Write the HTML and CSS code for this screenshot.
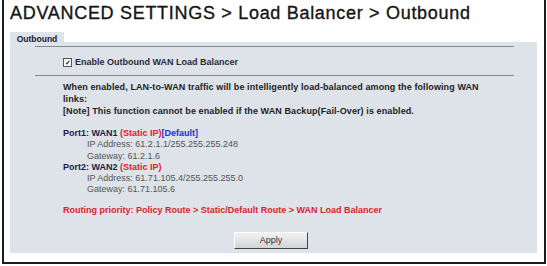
FILE: index.html
```html
<!DOCTYPE html>
<html lang="en">
<head>
    <meta charset="UTF-8">
    <title>Load Balancer - Outbound</title>
    <link rel="stylesheet" href="styles.css">
</head>
<body>
    <div class="frame">
        <h1 class="title">ADVANCED SETTINGS &gt; Load Balancer &gt; Outbound</h1>
        <div class="tabs">
            <span class="tab">Outbound</span>
        </div>
        <div class="panel">
            <hr class="rule">
            <label class="enable">
                <span class="check">&#10003;</span>
                Enable Outbound WAN Load Balancer
            </label>
            <hr class="rule">
            <div class="desc">
                <p>When enabled, LAN-to-WAN traffic will be intelligently load-balanced among the following WAN links:</p>
                <p>[Note] This function cannot be enabled if the WAN Backup(Fail-Over) is enabled.</p>
            </div>
            <div class="ports">
                <div class="port">Port1: WAN1 <span class="red">(Static IP)</span><span class="blue">[Default]</span></div>
                <div class="info">IP Address: 61.2.1.1/255.255.255.248</div>
                <div class="info">Gateway: 61.2.1.6</div>
                <div class="port">Port2: WAN2 <span class="red">(Static IP)</span></div>
                <div class="info">IP Address: 61.71.105.4/255.255.255.0</div>
                <div class="info">Gateway: 61.71.105.6</div>
            </div>
            <div class="priority">Routing priority: Policy Route &gt; Static/Default Route &gt; WAN Load Balancer</div>
            <div class="actions">
                <button class="apply">Apply</button>
            </div>
        </div>
    </div>
</body>
</html>
```

FILE: styles.css
```css
body {
    margin: 0;
    background: #fff;
    font-family: "Liberation Sans", Arial, sans-serif;
}
.frame {
    width: 540px;
    height: 262px;
    margin-left: 2px;
    border: 2px solid #1c1c1c;
    border-top: none;
    background: #fff;
}
.title {
    margin: 0;
    padding: 3px 0 0 6px;
    height: 25px;
    font-size: 18px;
    font-weight: normal;
    color: #151515;
    letter-spacing: 0.7px;
    -webkit-text-stroke: 0.35px #151515;
}
.tabs {
    padding-left: 6px;
    height: 14px;
}
.tab {
    display: inline-block;
    width: 54px;
    height: 14px;
    line-height: 15px;
    text-align: center;
    background: #dde4ea;
    font-size: 8.5px;
    font-weight: bold;
    color: #1a1a2a;
}
.panel {
    margin-left: 6px;
    width: 527px;
    height: 211px;
    background: #dde3e8;
    padding-top: 4px;
    box-sizing: border-box;
}
.rule {
    margin: 0 0 0 25px;
    width: 479px;
    border: none;
    border-top: 1px solid #8a8a8a;
    height: 0;
}
.enable {
    display: flex;
    align-items: center;
    gap: 3px;
    height: 28px;
    padding: 2px 0 0 53px;
    box-sizing: border-box;
    font-size: 9px;
    font-weight: bold;
    color: #2a2a3a;
}
.check {
    display: inline-block;
    width: 7px;
    height: 7px;
    border: 1px solid #555;
    background: #fff;
    font-size: 7px;
    line-height: 7px;
    text-align: center;
    color: #222;
}
.desc {
    padding: 5px 40px 0 53px;
    font-size: 9px;
    font-weight: bold;
    color: #222;
    line-height: 12px;
    letter-spacing: 0.1px;
}
.desc p {
    margin: 0;
}
.ports {
    padding: 11px 0 0 53px;
    font-size: 9px;
    line-height: 11.3px;
}
.port {
    font-weight: bold;
    color: #1c1c4a;
}
.red {
    color: #e0202a;
}
.blue {
    color: #2030d0;
}
.info {
    padding-left: 24px;
    color: #555;
}
.priority {
    padding: 9px 0 0 53px;
    font-size: 9px;
    font-weight: bold;
    color: #d8242c;
}
.actions {
    display: flex;
    padding: 17px 0 0 224px;
}
.apply {
    width: 74px;
    height: 17px;
    padding: 0;
    font-family: "Liberation Sans", Arial, sans-serif;
    font-size: 9px;
    color: #333;
    background: linear-gradient(#f2f2f2, #d4d4d4);
    border: 1px solid;
    border-color: #fff #444 #444 #fff;
}
```
